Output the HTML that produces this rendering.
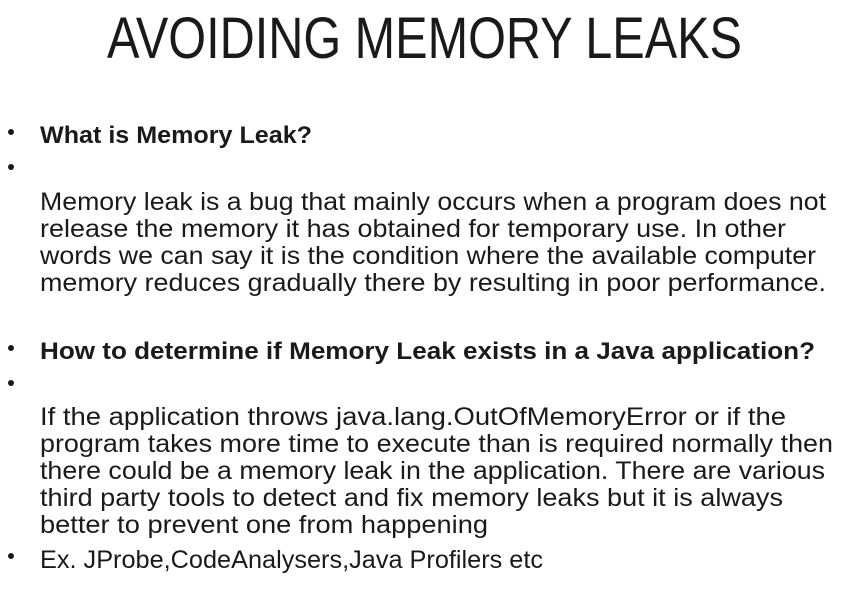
<!DOCTYPE html>
<html><head><meta charset="utf-8"><style>
html,body{margin:0;padding:0;background:#fff;}
svg{display:block}
text{font-family:"Liberation Sans",sans-serif;fill:#1a1a1a;}
.b{font-weight:bold;}
</style></head><body>
<svg width="847" height="595" viewBox="0 0 847 595" xmlns="http://www.w3.org/2000/svg">
<text x="107" y="58" font-size="58" textLength="635" lengthAdjust="spacingAndGlyphs">AVOIDING MEMORY LEAKS</text>
<g fill="#1a1a1a">
<circle cx="11" cy="132" r="3"/><circle cx="11" cy="167" r="3"/>
<circle cx="11" cy="348" r="3"/><circle cx="11" cy="383" r="3"/>
<circle cx="11" cy="556" r="3"/>
</g>
<text class="b" x="40" y="143" font-size="24" textLength="272" lengthAdjust="spacingAndGlyphs">What is Memory Leak?</text>
<text x="40" y="210" font-size="25" textLength="786" lengthAdjust="spacingAndGlyphs">Memory leak is a bug that mainly occurs when a program does not</text>
<text x="40" y="237" font-size="25" textLength="746" lengthAdjust="spacingAndGlyphs">release the memory it has obtained for temporary use. In other</text>
<text x="40" y="264" font-size="25" textLength="776" lengthAdjust="spacingAndGlyphs">words we can say it is the condition where the available computer</text>
<text x="40" y="291" font-size="25" textLength="786" lengthAdjust="spacingAndGlyphs">memory reduces gradually there by resulting in poor performance.</text>
<text class="b" x="40" y="359" font-size="24" textLength="775" lengthAdjust="spacingAndGlyphs">How to determine  if  Memory Leak exists  in a Java application?</text>
<text x="40" y="425" font-size="25" textLength="746" lengthAdjust="spacingAndGlyphs">If the application throws java.lang.OutOfMemoryError  or if the</text>
<text x="40" y="452" font-size="25" textLength="793" lengthAdjust="spacingAndGlyphs">program takes more time to execute than is required normally then</text>
<text x="40" y="479" font-size="25" textLength="785" lengthAdjust="spacingAndGlyphs">there could be a memory leak in the application. There are various</text>
<text x="40" y="506" font-size="25" textLength="743" lengthAdjust="spacingAndGlyphs">third party tools to detect and fix memory leaks but it is always</text>
<text x="40" y="533" font-size="25" textLength="448" lengthAdjust="spacingAndGlyphs">better to prevent one from happening</text>
<text x="40" y="568" font-size="25" textLength="503" lengthAdjust="spacingAndGlyphs">Ex. JProbe,CodeAnalysers,Java  Profilers etc</text>
</svg>
</body></html>
